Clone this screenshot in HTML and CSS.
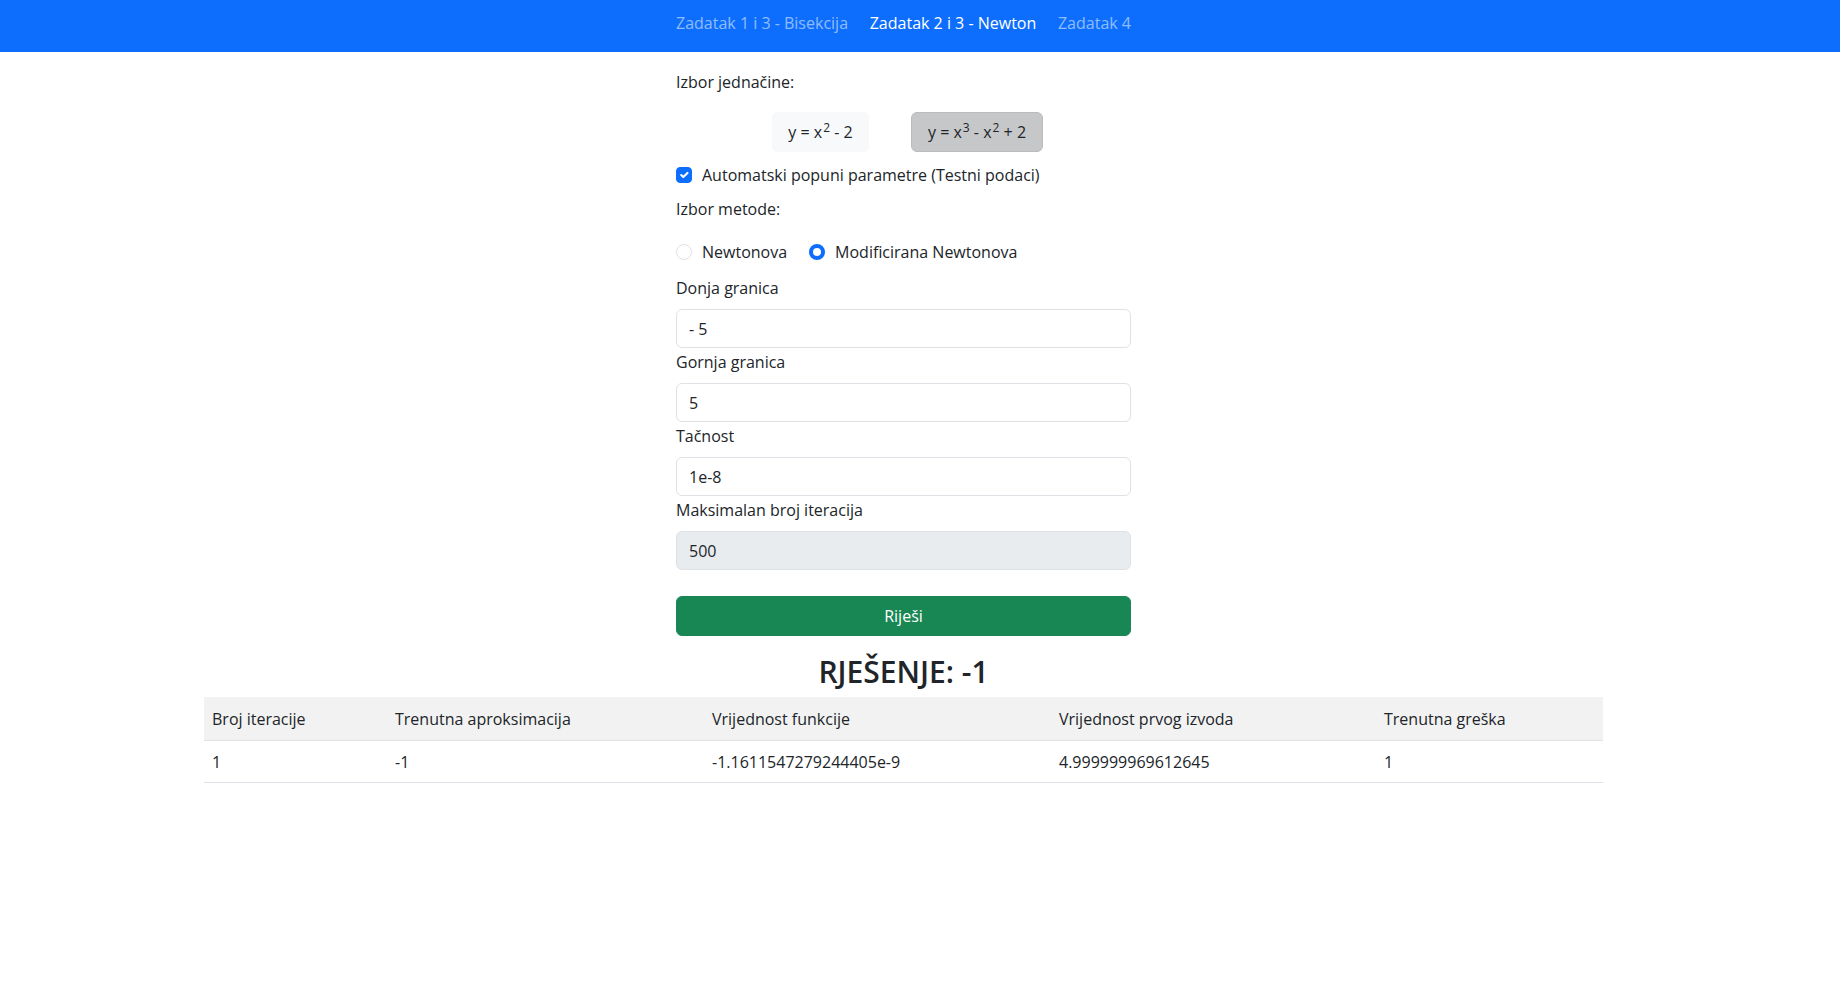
FILE: index.html
```html
<!DOCTYPE html>
<html lang="hr">
<head>
<meta charset="utf-8">
<title>Zadatak 2 i 3 - Newton</title>
<link rel="stylesheet" href="styles.css">
</head>
<body>
<nav class="navbar">
  <div class="nav-inner">
    <a class="nav-link" href="#">Zadatak 1 i 3 - Bisekcija</a>
    <a class="nav-link active" href="#">Zadatak 2 i 3 - Newton</a>
    <a class="nav-link" href="#">Zadatak 4</a>
  </div>
</nav>
<main class="page">
  <form class="panel">
    <div class="section-label eq-label">Izbor jednačine:</div>
    <div class="eq-row">
      <button type="button" class="eq-btn eq-first">y = x<sup>2</sup> - 2</button>
      <button type="button" class="eq-btn eq-second selected">y = x<sup>3</sup> - x<sup>2</sup> + 2</button>
    </div>
    <label class="check-row">
      <span class="checkbox">
        <svg viewBox="0 0 20 20" width="16" height="16"><path d="m6 10 3 3 6-6" fill="none" stroke="#fff" stroke-width="3" stroke-linecap="round" stroke-linejoin="round"/></svg>
      </span>
      <span>Automatski popuni parametre (Testni podaci)</span>
    </label>
    <div class="section-label method-label">Izbor metode:</div>
    <div class="radio-row">
      <label class="radio-item"><span class="radio"></span><span>Newtonova</span></label>
      <label class="radio-item"><span class="radio checked"></span><span>Modificirana Newtonova</span></label>
    </div>
    <div class="field first">
      <label class="field-label">Donja granica</label>
      <div class="input">- 5</div>
    </div>
    <div class="field">
      <label class="field-label">Gornja granica</label>
      <div class="input">5</div>
    </div>
    <div class="field">
      <label class="field-label">Tačnost</label>
      <div class="input">1e-8</div>
    </div>
    <div class="field">
      <label class="field-label">Maksimalan broj iteracija</label>
      <div class="input disabled">500</div>
    </div>
    <button type="button" class="solve-btn">Riješi</button>
  </form>
  <h2 class="result">RJEŠENJE: -1</h2>
  <table class="results">
    <colgroup>
      <col class="c1"><col class="c2"><col class="c3"><col class="c4"><col class="c5">
    </colgroup>
    <thead>
      <tr>
        <th>Broj iteracije</th>
        <th>Trenutna aproksimacija</th>
        <th>Vrijednost funkcije</th>
        <th>Vrijednost prvog izvoda</th>
        <th>Trenutna greška</th>
      </tr>
    </thead>
    <tbody>
      <tr>
        <td>1</td>
        <td>-1</td>
        <td>-1.1611547279244405e-9</td>
        <td>4.999999969612645</td>
        <td>1</td>
      </tr>
    </tbody>
  </table>
</main>
</body>
</html>
```
FILE: styles.css
```css
* { box-sizing: border-box; }
html, body { margin: 0; padding: 0; background: #fff; }
body {
  font-family: "Open Sans", "Noto Sans", "Liberation Sans", sans-serif;
  font-size: 16px;
  line-height: 24px;
  color: #212529;
}

.navbar {
  background: #0d6efd;
  height: 52px;
  padding-top: 11px;
  padding-right: 33px;
}
.nav-inner {
  width: 455px;
  margin: 0 auto;
  display: flex;
  justify-content: space-between;
}
.nav-link {
  color: rgba(255, 255, 255, 0.55);
  text-decoration: none;
  line-height: 24px;
  white-space: nowrap;
}
.nav-link.active { color: #fff; }

.page { width: 1807px; }

.panel {
  width: 455px;
  margin: 0 auto;
  display: flex;
  flex-direction: column;
}

.section-label { line-height: 24px; }
.eq-label { margin-top: 18px; }

.eq-row {
  margin-top: 18px;
  display: flex;
  gap: 42px;
  padding-left: 96px;
}
.eq-btn {
  font: inherit;
  color: #212529;
  height: 40px;
  padding: 0 12px;
  border-radius: 6px;
  background: #f8f9fa;
  border: 1px solid #f8f9fa;
  line-height: 24px;
}
.eq-first { width: 97px; padding: 0; }
.eq-second { width: 132px; padding: 0; }
.eq-btn.selected {
  background: #c6c7c8;
  border-color: #babbbc;
}
.eq-btn sup {
  font-size: 0.75em;
  line-height: 0;
  position: relative;
  vertical-align: baseline;
  top: -0.5em;
  margin-left: 1px;
}

.check-row {
  margin-top: 11px;
  display: flex;
  align-items: center;
  gap: 10px;
  line-height: 24px;
}
.checkbox {
  width: 16px;
  height: 16px;
  border-radius: 4px;
  background: #0d6efd;
  border: 1px solid #0d6efd;
  display: flex;
  align-items: center;
  justify-content: center;
}
.checkbox svg { display: block; }

.method-label { margin-top: 10px; }

.radio-row {
  margin-top: 19px;
  display: flex;
  gap: 22px;
  line-height: 24px;
}
.radio-item {
  display: flex;
  align-items: center;
  gap: 10px;
}
.radio {
  width: 16px;
  height: 16px;
  border-radius: 50%;
  border: 1px solid #dee2e6;
  background: #fff;
}
.radio.checked {
  border: 4px solid #0d6efd;
  background: #fff;
}

.field { display: flex; flex-direction: column; margin-top: 2px; }
.field.first { margin-top: 12px; }
.field-label { line-height: 24px; margin-bottom: 9px; }
.input {
  height: 39px;
  border: 1px solid #dee2e6;
  border-radius: 6px;
  padding: 0 12px;
  display: flex;
  align-items: center;
  background: #fff;
}
.input.disabled { background: #e9ecef; }

.solve-btn {
  margin-top: 26px;
  height: 40px;
  font: inherit;
  color: #fff;
  background: #198754;
  border: 1px solid #198754;
  border-radius: 6px;
}

.result {
  margin: 18px 0 7px;
  text-align: center;
  font-size: 30px;
  line-height: 36px;
  font-weight: 600;
  color: #212529;
}

.results {
  width: 1399px;
  margin: 0 auto;
  border-collapse: collapse;
  table-layout: fixed;
}
.c1 { width: 183px; }
.c2 { width: 317px; }
.c3 { width: 347px; }
.c4 { width: 325px; }
.c5 { width: 227px; }
.results th, .results td {
  text-align: left;
  font-weight: 400;
  padding: 10px 8px 9px 8px;
  line-height: 24px;
  border-bottom: 1px solid #dee2e6;
}
.results thead th { background: #f2f2f2; }
.results td { padding-top: 9px; padding-bottom: 8px; }
```
